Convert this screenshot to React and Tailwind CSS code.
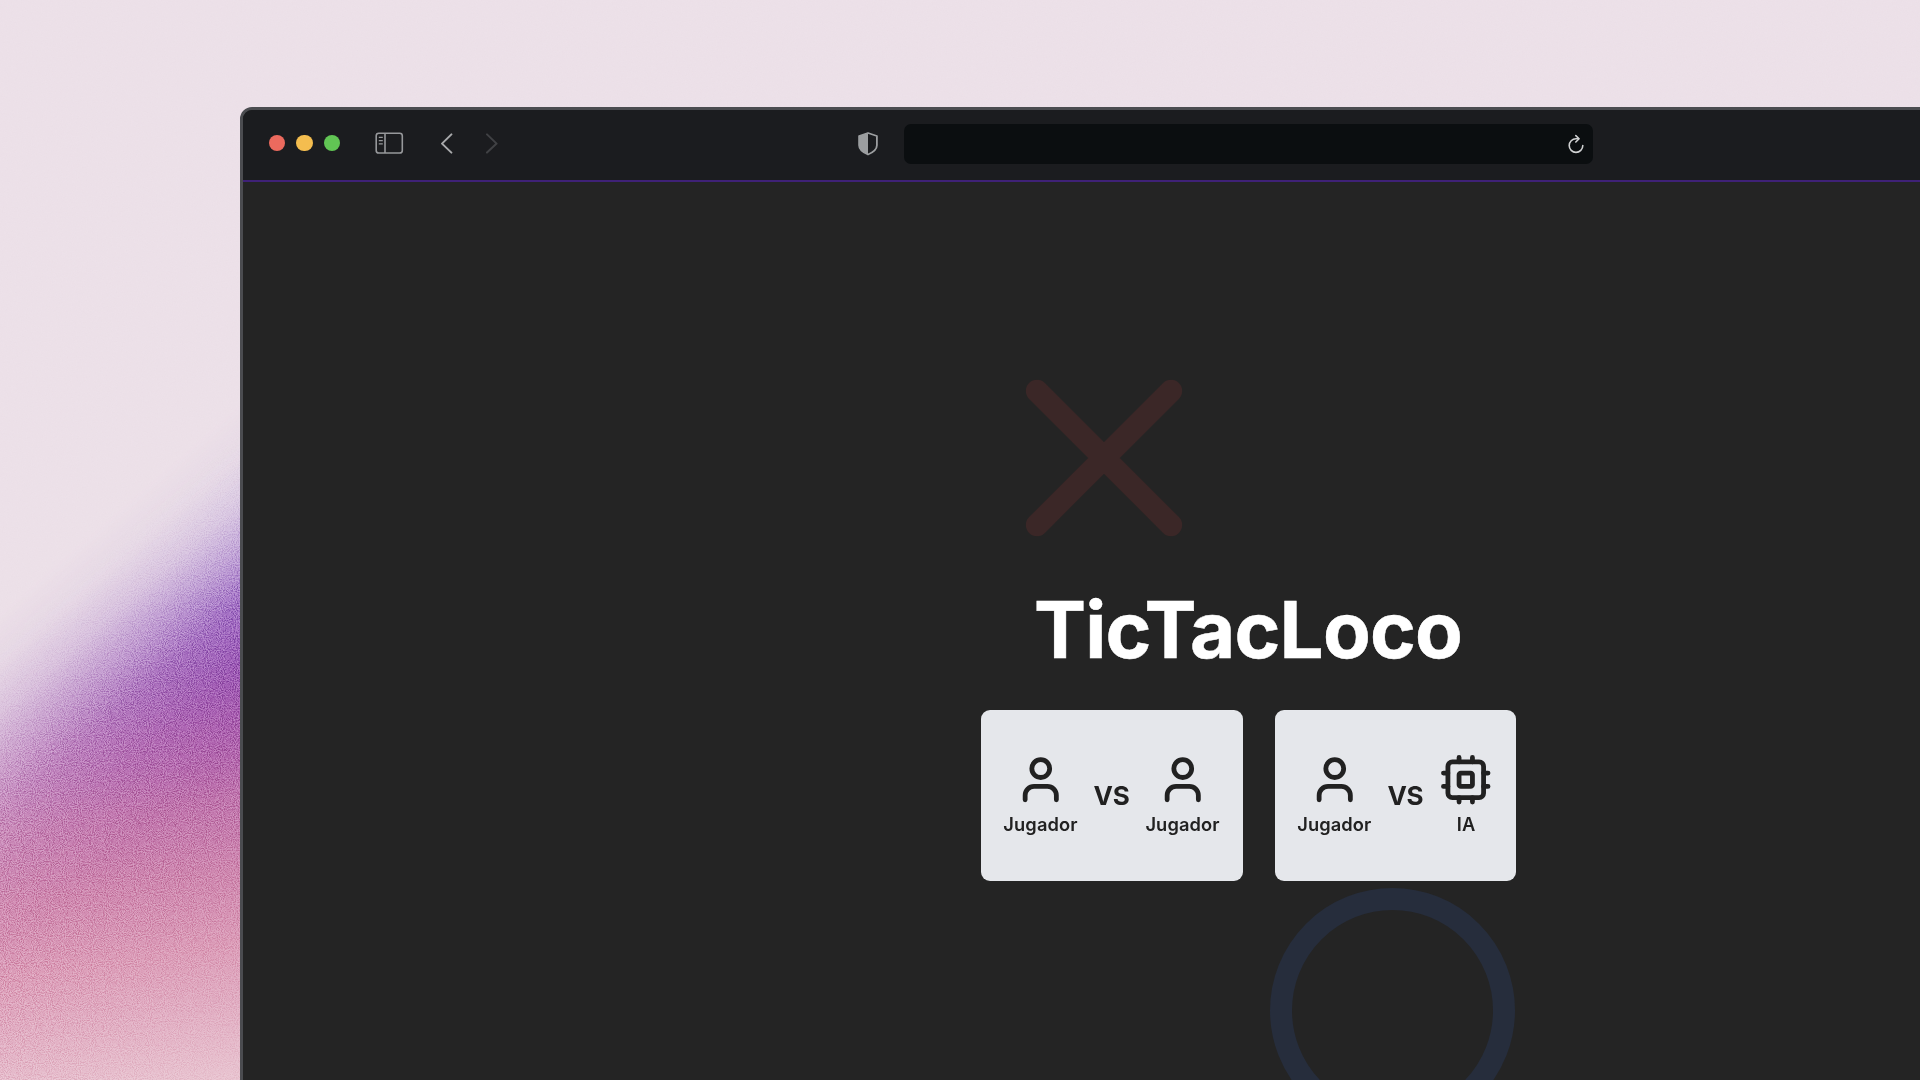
import React from "react";
import { User } from "lucide-react";

function Backdrop() {
  return (
    <div aria-hidden="true" className="absolute inset-0 bg-[#ede1e9]">
      <div className="absolute left-0 top-[300px] h-[780px] w-[260px] bg-[linear-gradient(172deg,#9480d4_0%,#916ed0_27%,#8644b8_41%,#9449b0_49%,#a95aae_56%,#c073ad_65%,#cf86af_74%,#dc9cb8_83%,#e9c3d0_99%)] [mask-image:linear-gradient(139deg,transparent_31%,rgba(0,0,0,0.05)_36%,rgba(0,0,0,0.2)_41%,rgba(0,0,0,0.46)_46%,rgba(0,0,0,0.74)_51%,rgba(0,0,0,0.91)_57%,black_64%)]" />
      <svg className="absolute left-0 top-0 h-full w-full opacity-15">
        <filter id="fine">
          <feTurbulence type="fractalNoise" baseFrequency="0.8" numOctaves="2" seed="4" />
          <feColorMatrix type="saturate" values="0.4" />
        </filter>
        <rect width="100%" height="100%" filter="url(#fine)" opacity="0.25" />
      </svg>
      <svg className="absolute left-0 top-[300px] h-[780px] w-[260px] mix-blend-soft-light [mask-image:linear-gradient(138deg,transparent_33%,rgba(0,0,0,0.6)_49%,rgba(0,0,0,0.55)_70%,rgba(0,0,0,0.2)_100%)]">
        <filter id="coarse" colorInterpolationFilters="sRGB">
          <feTurbulence type="fractalNoise" baseFrequency="0.93" numOctaves="2" seed="8" />
          <feColorMatrix values="2.2 0 0 0 -0.58  2.2 0 0 0 -0.58  2.2 0 0 0 -0.58  0 0 0 0 1" />
        </filter>
        <rect width="100%" height="100%" filter="url(#coarse)" />
      </svg>
    </div>
  );
}

function Toolbar() {
  return (
    <header className="flex h-[72px] items-start border-b-2 border-[#3f2177] bg-[#1b1c1f]">
      <div className="ml-[26px] mt-[25px] flex gap-[11px]">
        <span className="size-[16.4px] rounded-full bg-[#ec6a5e]" />
        <span className="size-[16.4px] rounded-full bg-[#f4bd4f]" />
        <span className="size-[16.4px] rounded-full bg-[#61c554]" />
      </div>
      <svg className="ml-[34.6px] mt-[22px] h-[23px] w-[29px]" viewBox="0 0 29 23" fill="none" stroke="#97989b" strokeWidth="1.6">
        <rect x="1.2" y="1.2" width="26.1" height="19.8" rx="2.6" />
        <path d="M10 1.2v19.8" />
        <path d="M3.8 5.3h4M3.8 8.6h4M3.8 11.9h4" strokeWidth="1.2" />
      </svg>
      <svg className="ml-[36px] mt-[23px] h-[22px] w-[14px]" viewBox="0 0 14 22" fill="none" stroke="#a8a9ab" strokeWidth="2" strokeLinecap="round" strokeLinejoin="round">
        <path d="M11.4 1.4 2 10.6l9.4 9" />
      </svg>
      <svg className="ml-[31px] mt-[23px] h-[22px] w-[14px]" viewBox="0 0 14 22" fill="none" stroke="#404144" strokeWidth="2" strokeLinecap="round" strokeLinejoin="round">
        <path d="M2 1.4l9.6 9.2-9.6 9" />
      </svg>
      <svg className="ml-[359px] mt-[22px] h-[24px] w-[20px]" viewBox="0 0 20 24">
        <path d="M10 1 18.9 4v9.3c0 4.3-3.6 7-8.9 9.2C4.7 20.3 1.1 17.6 1.1 13.3V4z" fill="none" stroke="#9c9ea0" strokeWidth="1.8" strokeLinejoin="round" />
        <path d="M10 1v21.5C4.7 20.3 1.1 17.6 1.1 13.3V4z" fill="#9c9ea0" />
      </svg>
      <div className="ml-[25.9px] mt-[14px] flex h-[40px] w-[689px] items-center justify-end rounded-[7px] bg-[#0b0e10] pr-[8.5px]">
        <svg className="h-[20px] w-[16px]" viewBox="0 0 16 20" fill="none" stroke="#d0d1d2" strokeWidth="1.6" strokeLinecap="round" strokeLinejoin="round">
          <path d="M9.8 4.8H8a6.8 6.8 0 1 0 6.8 6.8" />
          <path d="M7.8 1.6l3.3 3.2-3.3 3.2" />
        </svg>
      </div>
    </header>
  );
}

function Chip({ size, strokeWidth }) {
  return (
    <svg width={size} height={size} viewBox="0 0 24 24" fill="none" stroke="currentColor" strokeWidth={strokeWidth} strokeLinecap="round" strokeLinejoin="round">
      <rect x="4" y="4" width="16" height="16" rx="2" />
      <rect x="9" y="9" width="6" height="6" rx="0.8" />
      <path d="M9 2v2M15 2v2M9 20v2M15 20v2M2 9h2M2 15h2M20 9h2M20 15h2" />
    </svg>
  );
}

function Side({ icon: Icon, label }) {
  return (
    <div className="flex flex-col items-center">
      <Icon size={53.5} strokeWidth={2.15} />
      <span className="mt-[4px] text-[18.3px] leading-[28px] tracking-[0.1px]">{label}</span>
    </div>
  );
}

function ModeButton({ className, rival, rivalLabel }) {
  return (
    <button className={"flex h-[171px] items-center justify-center gap-[16px] rounded-[9px] bg-[#e5e7eb] font-semibold text-[#212121] " + className}>
      <Side icon={User} label="Jugador" />
      <span className="text-[26px] font-bold leading-[30px] tracking-[-0.3px]">VS</span>
      <Side icon={rival} label={rivalLabel} />
    </button>
  );
}

export default function App() {
  return (
    <div className="relative h-[1080px] w-[1920px] overflow-hidden font-['Inter',sans-serif]">
      <Backdrop />
      <div className="relative ml-[240px] mt-[107px] h-[1100px] w-[2016px] overflow-hidden rounded-tl-[12px] border-[3px] border-[#4b4c50] bg-[#242424]">
        <Toolbar />
        <main className="flex flex-col items-center">
          <svg className="absolute left-[727px] top-[214px] size-[268px]" viewBox="0 0 24 24" fill="none" stroke="#3b2727" strokeWidth="2" strokeLinecap="round">
            <path d="M18 6 6 18M6 6l12 12" />
          </svg>
          <div className="absolute left-[1027px] top-[778px] size-[245px] rounded-full border-[22px] border-[#262d3c]" />
          <h1 className="relative mt-[400px] text-[78px] font-bold leading-[96px] tracking-[-0.8px] text-white [-webkit-text-stroke:0.5px_white]">TicTacLoco</h1>
          <div className="relative mt-[32px] flex gap-[32px]">
            <ModeButton className="w-[262px]" rival={User} rivalLabel="Jugador" />
            <ModeButton className="w-[241px]" rival={Chip} rivalLabel="IA" />
          </div>
        </main>
      </div>
    </div>
  );
}
